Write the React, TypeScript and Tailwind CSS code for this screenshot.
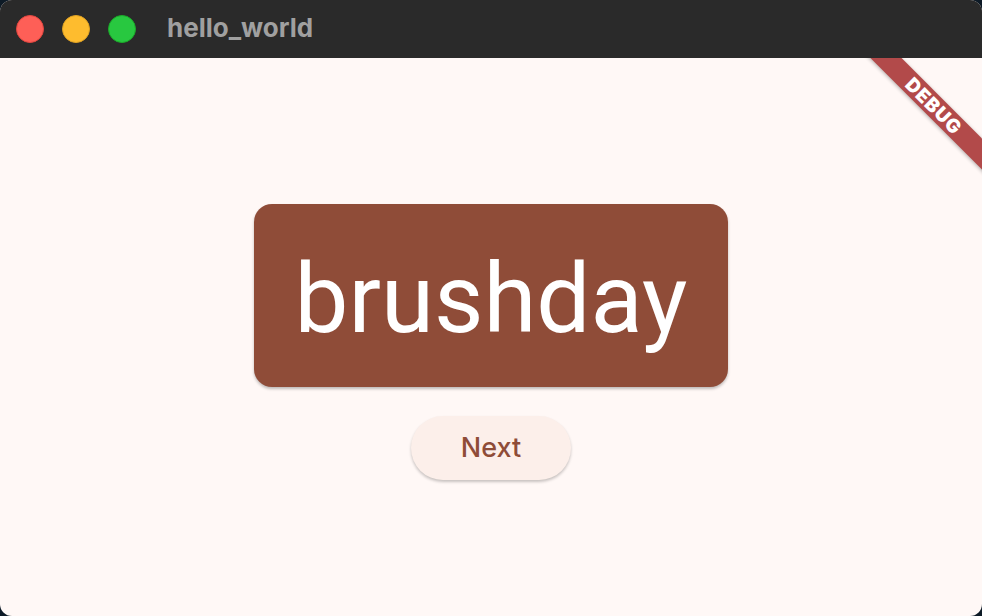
import React from "react";

export default function App() {
  return (
    <div className="w-[982px] h-[616px] bg-[#0d1a26] overflow-hidden">
      <div className="w-full h-full rounded-[12px] overflow-hidden flex flex-col bg-[#fff8f6]">
        <div className="h-[58px] bg-[#2a2a2a] flex items-center pl-[16px] shrink-0">
          <div className="flex gap-[18px]">
            <div className="w-[28px] h-[28px] rounded-full bg-[#fe5f57] border border-[#e2463f]" />
            <div className="w-[28px] h-[28px] rounded-full bg-[#febc2e] border border-[#dea123]" />
            <div className="w-[28px] h-[28px] rounded-full bg-[#28c840] border border-[#1aab29]" />
          </div>
          <div
            className="ml-[31px] text-[26px] font-bold text-[#a0a0a0] leading-none pb-[2px]"
            style={{ fontFamily: "Inter, 'Liberation Sans', sans-serif" }}
          >
            hello_world
          </div>
        </div>
        <div className="relative flex-1 flex flex-col items-center overflow-hidden">
          <div className="mt-[146px] w-[474px] h-[183px] rounded-[18px] bg-[#8f4c38] shadow-[0_2px_3px_rgba(0,0,0,0.25)] flex items-center justify-center">
            <span
              className="text-white text-[96px] leading-none pt-[6px]"
              style={{ fontFamily: "Roboto, 'Liberation Sans', sans-serif" }}
            >
              brushday
            </span>
          </div>
          <button
            className="mt-[29px] w-[160px] h-[64px] rounded-full bg-[#fcefea] shadow-[0_2px_3px_rgba(0,0,0,0.22)] text-[#8f4c38] text-[27px] font-medium flex items-center justify-center"
            style={{ fontFamily: "Inter, 'Liberation Sans', sans-serif" }}
          >
            Next
          </button>
          <div className="absolute top-[37px] right-[-42px] w-[180px] h-[22px] rotate-45 bg-[#b24a4a] shadow-[0_1px_4px_rgba(0,0,0,0.3)] flex items-center justify-center">
            <span
              className="text-white text-[19px] font-black tracking-[1px] leading-none"
              style={{ fontFamily: "Inter, 'Liberation Sans', sans-serif" }}
            >
              DEBUG
            </span>
          </div>
        </div>
      </div>
    </div>
  );
}
